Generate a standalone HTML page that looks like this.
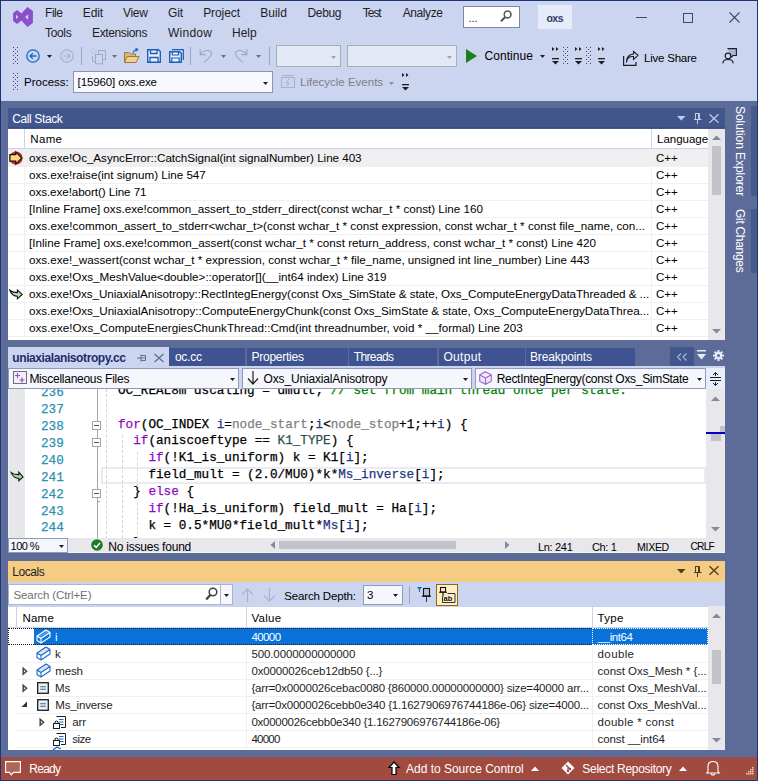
<!DOCTYPE html><html><head><meta charset="utf-8"><style>
*{margin:0;padding:0;box-sizing:border-box}
html,body{width:758px;height:781px;overflow:hidden}
body{position:relative;background:#CCD5F0;font-family:"Liberation Sans",sans-serif;font-size:11.5px;color:#000}
div{position:absolute}
.t{white-space:pre}
.m{font-family:"Liberation Mono",monospace;font-size:12.67px;-webkit-text-stroke:0.25px}
svg{position:absolute;overflow:visible}
</style></head><body><div style="left:0;top:0;width:758px;height:781px;border:1px solid #1B3577;z-index:50;pointer-events:none"></div>
<svg style="left:12px;top:6px" width="22" height="22" viewBox="0 0 22 22"><path d="M1.1 7 L5.1 4 L9.5 7.6 L15.4 1.1 L20.9 4.9 L20.9 17.1 L15.4 20.9 L9.5 14.4 L5.1 18 L1.1 15 Z M4 8.7 L4 13.3 L6.3 11 Z M16.2 8.2 L16.2 13.8 L13 11 Z" fill="#8A4FC9" fill-rule="evenodd"/></svg>
<div class="t" style="left:45.00px;top:4px;line-height:18px;font-size:12px;color:#1E1E1E;letter-spacing:-0.444px">File</div>
<div class="t" style="left:82.80px;top:4px;line-height:18px;font-size:12px;color:#1E1E1E;letter-spacing:-0.159px">Edit</div>
<div class="t" style="left:122.90px;top:4px;line-height:18px;font-size:12px;color:#1E1E1E;letter-spacing:-0.241px">View</div>
<div class="t" style="left:168.00px;top:4px;line-height:18px;font-size:12px;color:#1E1E1E;letter-spacing:-0.168px">Git</div>
<div class="t" style="left:203.20px;top:4px;line-height:18px;font-size:12px;color:#1E1E1E;letter-spacing:-0.091px">Project</div>
<div class="t" style="left:260.20px;top:4px;line-height:18px;font-size:12px;color:#1E1E1E;letter-spacing:0.028px">Build</div>
<div class="t" style="left:307.60px;top:4px;line-height:18px;font-size:12px;color:#1E1E1E;letter-spacing:-0.391px">Debug</div>
<div class="t" style="left:362.80px;top:4px;line-height:18px;font-size:12px;color:#1E1E1E;letter-spacing:-1.036px">Test</div>
<div class="t" style="left:402.70px;top:4px;line-height:18px;font-size:12px;color:#1E1E1E;letter-spacing:-0.399px">Analyze</div>
<div class="t" style="left:45.00px;top:24px;line-height:18px;font-size:12px;color:#1E1E1E;letter-spacing:-0.327px">Tools</div>
<div class="t" style="left:92.00px;top:24px;line-height:18px;font-size:12px;color:#1E1E1E;letter-spacing:-0.367px">Extensions</div>
<div class="t" style="left:168.00px;top:24px;line-height:18px;font-size:12px;color:#1E1E1E;letter-spacing:0.258px">Window</div>
<div class="t" style="left:232.00px;top:24px;line-height:18px;font-size:12px;color:#1E1E1E;letter-spacing:-0.028px">Help</div>
<div style="left:463px;top:6px;width:57px;height:22px;background:#FFFFFF;border:1px solid #7A88A6"></div>
<div class="t" style="left:468.5px;top:9px;line-height:18px;font-size:11px;color:#1E1E1E">...</div>
<svg style="left:500px;top:10px" width="14" height="14" viewBox="0 0 14 14"><circle cx="7.6" cy="4.5" r="3.4" fill="none" stroke="#555" stroke-width="1.5"/><path d="M5.2 7 L1 11.2" stroke="#555" stroke-width="2"/></svg>
<div style="left:538px;top:5px;width:34px;height:24px;background:#E6EBF9"></div>
<div class="t" style="left:546.40px;top:8.5px;line-height:18px;font-size:10.5px;font-weight:bold;color:#2E3B66;letter-spacing:-0.446px">oxs</div>
<div style="left:636px;top:17px;width:11px;height:1px;background:#3A4A78"></div>
<div style="left:683px;top:13px;width:10px;height:10px;border:1px solid #3A4A78"></div>
<svg style="left:729px;top:12px" width="11" height="11" viewBox="0 0 11 11"><path d="M0.5 0.5 L10.5 10.5 M10.5 0.5 L0.5 10.5" stroke="#3A4A78" stroke-width="1.1"/></svg>
<svg style="left:13px;top:47px" width="5" height="17" fill="#3C4670"><rect x="0" y="0" width="1" height="1"/><rect x="4" y="0" width="1" height="1"/><rect x="2" y="2" width="1" height="1"/><rect x="0" y="4" width="1" height="1"/><rect x="4" y="4" width="1" height="1"/><rect x="2" y="6" width="1" height="1"/><rect x="0" y="8" width="1" height="1"/><rect x="4" y="8" width="1" height="1"/><rect x="2" y="10" width="1" height="1"/><rect x="0" y="12" width="1" height="1"/><rect x="4" y="12" width="1" height="1"/><rect x="2" y="14" width="1" height="1"/><rect x="0" y="16" width="1" height="1"/><rect x="4" y="16" width="1" height="1"/></svg>
<svg style="left:26px;top:49px" width="14" height="14" viewBox="0 0 14 14"><circle cx="7" cy="7" r="6.2" fill="none" stroke="#1A6AC6" stroke-width="1.3"/><path d="M10.5 7 H4 M6.8 4.2 L4 7 L6.8 9.8" fill="none" stroke="#1A6AC6" stroke-width="1.3"/></svg>
<svg style="left:47px;top:55px" width="5" height="3"><path d="M0 0 H5 L2.5 3 Z" fill="#1E1E1E"/></svg>
<svg style="left:60px;top:49px" width="14" height="14" viewBox="0 0 14 14"><circle cx="7" cy="7" r="6.2" fill="none" stroke="#A9B1C7" stroke-width="1.2"/><path d="M3.5 7 H10 M7.2 4.2 L10 7 L7.2 9.8" fill="none" stroke="#A9B1C7" stroke-width="1.2"/></svg>
<div style="left:81px;top:47px;width:1px;height:18px;background:#99A3C4"></div>
<svg style="left:90px;top:48px" width="17" height="17" viewBox="0 0 17 17"><rect x="8.5" y="2.5" width="7" height="9" fill="none" stroke="#A3ABC2" stroke-width="1"/><rect x="5.5" y="6.5" width="7" height="9.3" fill="#CCD5F0" stroke="#A3ABC2" stroke-width="1"/><path d="M2.5 8 V13.5 H5" fill="none" stroke="#A3ABC2"/><path d="M3.4 0 V2 M3.4 4.8 V6.8 M0 3.4 H2 M4.8 3.4 H6.8 M1 1 L2 2 M5.8 1 L4.8 2 M1 5.8 L2 4.8 M5.8 5.8 L4.8 4.8" stroke="#B4BBCF" stroke-width="0.8"/></svg>
<svg style="left:112px;top:55px" width="5" height="3"><path d="M0 0 H5 L2.5 3 Z" fill="#6E6E6E"/></svg>
<svg style="left:124px;top:48px" width="16" height="15" viewBox="0 0 16 15"><path d="M0.5 4.5 H5 L6.5 6 H11.5 V14.5 H0.5 Z" fill="#DCB67A" stroke="#9D7A3C"/><path d="M0.5 14.5 L3 8.5 H15 L12 14.5 Z" fill="#F0D094" stroke="#9D7A3C"/><path d="M9 5 Q10 1.5 13.5 1.5 M11.5 0 L13.8 1.5 L11.5 3.2" fill="none" stroke="#1A6AC6" stroke-width="1.2"/></svg>
<svg style="left:147px;top:49px" width="14" height="14" viewBox="0 0 14 14"><path d="M0.7 0.7 H11.5 L13.3 2.5 V13.3 H0.7 Z" fill="#E8EEFA" stroke="#1A5FB4" stroke-width="1.4"/><path d="M3.5 0.7 V4.5 H10 V0.7 M3 13.3 V8.5 H11 V13.3" fill="none" stroke="#1A5FB4" stroke-width="1.3"/></svg>
<svg style="left:169px;top:49px" width="15" height="14" viewBox="0 0 15 14"><path d="M3 0.7 H14.3 V11" fill="none" stroke="#1A5FB4" stroke-width="1.2"/><path d="M0.7 2.7 H10.5 L12.3 4.5 V13.3 H0.7 Z" fill="#E8EEFA" stroke="#1A5FB4" stroke-width="1.4"/><path d="M3.3 2.7 V6 H9.5 V2.7 M2.8 13.3 V9 H10.2 V13.3" fill="none" stroke="#1A5FB4" stroke-width="1.2"/></svg>
<div style="left:190px;top:47px;width:1px;height:18px;background:#99A3C4"></div>
<svg style="left:199px;top:48px" width="14" height="16" viewBox="0 0 14 16"><path d="M1.2 1.3 V6.6 H6.8 M1.8 6 C5 1.5 12.6 1.5 12.6 5.5 C12.6 8 8 12 5.2 14.5" fill="none" stroke="#9EA6BE" stroke-width="1.1"/></svg>
<svg style="left:221px;top:55px" width="5" height="3"><path d="M0 0 H5 L2.5 3 Z" fill="#6E6E6E"/></svg>
<svg style="left:234px;top:48px" width="14" height="16" viewBox="0 0 14 16"><path d="M12.8 1.3 V6.6 H7.2 M12.2 6 C9 1.5 1.4 1.5 1.4 5.5 C1.4 8 6 12 8.8 14.5" fill="none" stroke="#9EA6BE" stroke-width="1.1"/></svg>
<svg style="left:256px;top:55px" width="5" height="3"><path d="M0 0 H5 L2.5 3 Z" fill="#6E6E6E"/></svg>
<div style="left:269px;top:47px;width:1px;height:18px;background:#99A3C4"></div>
<div style="left:276px;top:45px;width:65px;height:22px;background:#E3E8F5;border:1px solid #A9ADB8"></div>
<svg style="left:331px;top:56px" width="5" height="3"><path d="M0 0 H5 L2.5 3 Z" fill="#A0A4B0"/></svg>
<div style="left:347px;top:45px;width:110px;height:22px;background:#E3E8F5;border:1px solid #A9ADB8"></div>
<svg style="left:447px;top:56px" width="5" height="3"><path d="M0 0 H5 L2.5 3 Z" fill="#A0A4B0"/></svg>
<svg style="left:466px;top:49px" width="12" height="14"><path d="M0 0 L11 7 L0 14 Z" fill="#1C7D1C"/></svg>
<div class="t" style="left:484.50px;top:47px;line-height:18px;font-size:12px;letter-spacing:0.066px">Continue</div>
<svg style="left:540px;top:55px" width="5" height="3"><path d="M0 0 H5 L2.5 3 Z" fill="#1E1E1E"/></svg>
<svg style="left:552px;top:47px" width="7" height="18" fill="#1E1E1E"><path d="M0 0 L2.5 2 L0 4 Z M4 0 L6.5 2 L4 4 Z"/><rect x="0" y="11" width="7" height="1.3"/><path d="M0 14 H7 L3.5 17.5 Z"/></svg>
<svg style="left:563px;top:47px" width="5" height="17" fill="#3C4670"><rect x="0" y="0" width="1" height="1"/><rect x="4" y="0" width="1" height="1"/><rect x="2" y="2" width="1" height="1"/><rect x="0" y="4" width="1" height="1"/><rect x="4" y="4" width="1" height="1"/><rect x="2" y="6" width="1" height="1"/><rect x="0" y="8" width="1" height="1"/><rect x="4" y="8" width="1" height="1"/><rect x="2" y="10" width="1" height="1"/><rect x="0" y="12" width="1" height="1"/><rect x="4" y="12" width="1" height="1"/><rect x="2" y="14" width="1" height="1"/><rect x="0" y="16" width="1" height="1"/><rect x="4" y="16" width="1" height="1"/></svg>
<svg style="left:575px;top:47px" width="7" height="18" fill="#1E1E1E"><path d="M0 0 L2.5 2 L0 4 Z M4 0 L6.5 2 L4 4 Z"/><rect x="0" y="11" width="7" height="1.3"/><path d="M0 14 H7 L3.5 17.5 Z"/></svg>
<svg style="left:586px;top:47px" width="5" height="17" fill="#3C4670"><rect x="0" y="0" width="1" height="1"/><rect x="4" y="0" width="1" height="1"/><rect x="2" y="2" width="1" height="1"/><rect x="0" y="4" width="1" height="1"/><rect x="4" y="4" width="1" height="1"/><rect x="2" y="6" width="1" height="1"/><rect x="0" y="8" width="1" height="1"/><rect x="4" y="8" width="1" height="1"/><rect x="2" y="10" width="1" height="1"/><rect x="0" y="12" width="1" height="1"/><rect x="4" y="12" width="1" height="1"/><rect x="2" y="14" width="1" height="1"/><rect x="0" y="16" width="1" height="1"/><rect x="4" y="16" width="1" height="1"/></svg>
<svg style="left:598px;top:47px" width="7" height="18" fill="#1E1E1E"><path d="M0 0 L2.5 2 L0 4 Z M4 0 L6.5 2 L4 4 Z"/><rect x="0" y="11" width="7" height="1.3"/><path d="M0 14 H7 L3.5 17.5 Z"/></svg>
<svg style="left:623px;top:51px" width="16" height="15" viewBox="0 0 16 15"><path d="M0.6 5 V14.4 H13 V11" fill="none" stroke="#1E1E1E" stroke-width="1.2"/><path d="M3.5 11.5 Q4 5 10.5 5.5 V8.5 L15 4.3 L10.5 0.5 V3 Q3.5 3.5 3.5 11.5 Z" fill="none" stroke="#1E1E1E" stroke-width="1.1"/></svg>
<div class="t" style="left:644.00px;top:49px;line-height:18px;font-size:11.5px;letter-spacing:-0.220px">Live Share</div>
<svg style="left:722px;top:48px" width="15" height="16" viewBox="0 0 15 16"><path d="M5.5 0.6 H14.4 V7.5 H11 L9 9.5" fill="#A9B4D5" stroke="#1E1E1E" stroke-width="1.1"/><circle cx="6" cy="8" r="2.8" fill="#CCD5F0" stroke="#1E1E1E" stroke-width="1.2"/><path d="M0.8 15.4 Q1 11.5 6 11.5 Q11 11.5 11.2 15.4" fill="none" stroke="#1E1E1E" stroke-width="1.2"/></svg>
<svg style="left:13px;top:73px" width="5" height="17" fill="#3C4670"><rect x="0" y="0" width="1" height="1"/><rect x="4" y="0" width="1" height="1"/><rect x="2" y="2" width="1" height="1"/><rect x="0" y="4" width="1" height="1"/><rect x="4" y="4" width="1" height="1"/><rect x="2" y="6" width="1" height="1"/><rect x="0" y="8" width="1" height="1"/><rect x="4" y="8" width="1" height="1"/><rect x="2" y="10" width="1" height="1"/><rect x="0" y="12" width="1" height="1"/><rect x="4" y="12" width="1" height="1"/><rect x="2" y="14" width="1" height="1"/><rect x="0" y="16" width="1" height="1"/><rect x="4" y="16" width="1" height="1"/></svg>
<div class="t" style="left:24px;top:73px;line-height:18px;font-size:11.5px">Process:</div>
<div style="left:73px;top:71px;width:200px;height:22px;background:#F7F9FE;border:1px solid #8A95B0"></div>
<div class="t" style="left:77.60px;top:73px;line-height:18px;font-size:11.5px;letter-spacing:-0.129px">[15960] oxs.exe</div>
<svg style="left:263px;top:82px" width="5" height="3"><path d="M0 0 H5 L2.5 3 Z" fill="#1E1E1E"/></svg>
<svg style="left:281px;top:75px" width="14" height="13" viewBox="0 0 14 13"><rect x="0.5" y="2.5" width="13" height="10" fill="none" stroke="#A9B1C7"/><path d="M1 0.5 H13" stroke="#A9B1C7"/><path d="M8 4 L5 8 H8 L6 11" fill="none" stroke="#A9B1C7" stroke-width="1"/></svg>
<div class="t" style="left:300px;top:73px;line-height:18px;font-size:11.5px;color:#7D7F8C">Lifecycle Events</div>
<svg style="left:389px;top:82px" width="5" height="3"><path d="M0 0 H5 L2.5 3 Z" fill="#8A8C96"/></svg>
<svg style="left:402px;top:73px" width="7" height="18" fill="#1E1E1E"><path d="M0 0 L2.5 2 L0 4 Z M4 0 L6.5 2 L4 4 Z"/><rect x="0" y="11" width="7" height="1.3"/><path d="M0 14 H7 L3.5 17.5 Z"/></svg>
<div style="left:1px;top:101px;width:756px;height:656px;background:#5D6B99"></div>
<div style="left:8px;top:108px;width:717px;height:232px;background:#FFFFFF"></div>
<div style="left:8px;top:108px;width:717px;height:21px;background:#40568D"></div>
<div style="left:8px;top:127px;width:717px;height:1px;background:#3A4E82"></div>
<div class="t" style="left:12.30px;top:110px;line-height:18px;font-size:12px;color:#FFFFFF;letter-spacing:-0.393px">Call Stack</div>
<svg style="left:677px;top:116px" width="9" height="5"><path d="M0 0 H8.5 L4.25 4.5 Z" fill="#C3CBE6"/></svg>
<svg style="left:694px;top:113px" width="8" height="11" viewBox="0 0 8 11" fill="none" stroke="#C3CBE6"><path d="M1.5 0.5 H5.5 V6.5 M1.5 0 V6.5 M0 6.5 H7.5 M3.5 6.5 V11"/><path d="M4.5 0.5 V6.5" stroke-width="1"/></svg>
<svg style="left:709px;top:114px" width="10" height="9" viewBox="0 0 10 9"><path d="M0.5 0.2 L9.5 8.8 M9.5 0.2 L0.5 8.8" stroke="#C3CBE6" stroke-width="1.2"/></svg>
<div style="left:24px;top:129px;width:1px;height:20px;background:#C9D3EE"></div>
<div style="left:651px;top:129px;width:1px;height:20px;background:#C9D3EE"></div>
<div style="left:8px;top:148px;width:700px;height:1px;background:#C9D3EE"></div>
<div class="t" style="left:30.30px;top:130px;line-height:18px;font-size:11.5px;letter-spacing:0.339px">Name</div>
<div class="t" style="left:657px;top:130px;line-height:18px;font-size:11.5px">Language</div>
<div style="left:8px;top:149px;width:700px;height:18px;background:#EFEFF0"></div>
<div style="left:8px;top:166px;width:700px;height:1px;background:#F0F0F0"></div>
<div style="left:651px;top:149px;width:1px;height:17px;background:#F0F0F0"></div>
<div style="left:24px;top:149px;width:1px;height:17px;background:#F0F0F0"></div>
<div class="t" style="left:29.00px;top:149px;line-height:18px;font-size:11.67px;letter-spacing:-0.039px">oxs.exe!Oc_AsyncError::CatchSignal(int signalNumber) Line 403</div>
<div class="t" style="left:656px;top:149px;line-height:18px;font-size:11.5px">C++</div>
<div style="left:24px;top:166px;width:627px;height:17px;background:transparent"></div>
<div style="left:8px;top:183px;width:700px;height:1px;background:#F0F0F0"></div>
<div style="left:651px;top:166px;width:1px;height:17px;background:#F0F0F0"></div>
<div style="left:24px;top:166px;width:1px;height:17px;background:#F0F0F0"></div>
<div class="t" style="left:29.00px;top:166px;line-height:18px;font-size:11.67px;letter-spacing:-0.022px">oxs.exe!raise(int signum) Line 547</div>
<div class="t" style="left:656px;top:166px;line-height:18px;font-size:11.5px">C++</div>
<div style="left:24px;top:183px;width:627px;height:17px;background:transparent"></div>
<div style="left:8px;top:200px;width:700px;height:1px;background:#F0F0F0"></div>
<div style="left:651px;top:183px;width:1px;height:17px;background:#F0F0F0"></div>
<div style="left:24px;top:183px;width:1px;height:17px;background:#F0F0F0"></div>
<div class="t" style="left:29.00px;top:183px;line-height:18px;font-size:11.67px;letter-spacing:-0.075px">oxs.exe!abort() Line 71</div>
<div class="t" style="left:656px;top:183px;line-height:18px;font-size:11.5px">C++</div>
<div style="left:24px;top:200px;width:627px;height:17px;background:transparent"></div>
<div style="left:8px;top:217px;width:700px;height:1px;background:#F0F0F0"></div>
<div style="left:651px;top:200px;width:1px;height:17px;background:#F0F0F0"></div>
<div style="left:24px;top:200px;width:1px;height:17px;background:#F0F0F0"></div>
<div class="t" style="left:29.00px;top:200px;line-height:18px;font-size:11.67px;letter-spacing:-0.010px">[Inline Frame] oxs.exe!common_assert_to_stderr_direct(const wchar_t * const) Line 160</div>
<div class="t" style="left:656px;top:200px;line-height:18px;font-size:11.5px">C++</div>
<div style="left:24px;top:217px;width:627px;height:17px;background:transparent"></div>
<div style="left:8px;top:234px;width:700px;height:1px;background:#F0F0F0"></div>
<div style="left:651px;top:217px;width:1px;height:17px;background:#F0F0F0"></div>
<div style="left:24px;top:217px;width:1px;height:17px;background:#F0F0F0"></div>
<div class="t" style="left:29.00px;top:217px;line-height:18px;font-size:11.67px;letter-spacing:0.022px">oxs.exe!common_assert_to_stderr&lt;wchar_t&gt;(const wchar_t * const expression, const wchar_t * const file_name, con...</div>
<div class="t" style="left:656px;top:217px;line-height:18px;font-size:11.5px">C++</div>
<div style="left:24px;top:234px;width:627px;height:17px;background:transparent"></div>
<div style="left:8px;top:251px;width:700px;height:1px;background:#F0F0F0"></div>
<div style="left:651px;top:234px;width:1px;height:17px;background:#F0F0F0"></div>
<div style="left:24px;top:234px;width:1px;height:17px;background:#F0F0F0"></div>
<div class="t" style="left:29.00px;top:234px;line-height:18px;font-size:11.67px;letter-spacing:0.007px">[Inline Frame] oxs.exe!common_assert(const wchar_t * const return_address, const wchar_t * const) Line 420</div>
<div class="t" style="left:656px;top:234px;line-height:18px;font-size:11.5px">C++</div>
<div style="left:24px;top:251px;width:627px;height:17px;background:transparent"></div>
<div style="left:8px;top:268px;width:700px;height:1px;background:#F0F0F0"></div>
<div style="left:651px;top:251px;width:1px;height:17px;background:#F0F0F0"></div>
<div style="left:24px;top:251px;width:1px;height:17px;background:#F0F0F0"></div>
<div class="t" style="left:29.00px;top:251px;line-height:18px;font-size:11.67px;letter-spacing:-0.011px">oxs.exe!_wassert(const wchar_t * expression, const wchar_t * file_name, unsigned int line_number) Line 443</div>
<div class="t" style="left:656px;top:251px;line-height:18px;font-size:11.5px">C++</div>
<div style="left:24px;top:268px;width:627px;height:17px;background:transparent"></div>
<div style="left:8px;top:285px;width:700px;height:1px;background:#F0F0F0"></div>
<div style="left:651px;top:268px;width:1px;height:17px;background:#F0F0F0"></div>
<div style="left:24px;top:268px;width:1px;height:17px;background:#F0F0F0"></div>
<div class="t" style="left:29.00px;top:268px;line-height:18px;font-size:11.67px;letter-spacing:-0.010px">oxs.exe!Oxs_MeshValue&lt;double&gt;::operator[](__int64 index) Line 319</div>
<div class="t" style="left:656px;top:268px;line-height:18px;font-size:11.5px">C++</div>
<div style="left:24px;top:285px;width:627px;height:17px;background:transparent"></div>
<div style="left:8px;top:302px;width:700px;height:1px;background:#F0F0F0"></div>
<div style="left:651px;top:285px;width:1px;height:17px;background:#F0F0F0"></div>
<div style="left:24px;top:285px;width:1px;height:17px;background:#F0F0F0"></div>
<div class="t" style="left:29.00px;top:285px;line-height:18px;font-size:11.67px;letter-spacing:-0.051px">oxs.exe!Oxs_UniaxialAnisotropy::RectIntegEnergy(const Oxs_SimState &amp; state, Oxs_ComputeEnergyDataThreaded &amp; ...</div>
<div class="t" style="left:656px;top:285px;line-height:18px;font-size:11.5px">C++</div>
<div style="left:24px;top:302px;width:627px;height:17px;background:transparent"></div>
<div style="left:8px;top:319px;width:700px;height:1px;background:#F0F0F0"></div>
<div style="left:651px;top:302px;width:1px;height:17px;background:#F0F0F0"></div>
<div style="left:24px;top:302px;width:1px;height:17px;background:#F0F0F0"></div>
<div class="t" style="left:29.00px;top:302px;line-height:18px;font-size:11.67px;letter-spacing:-0.028px">oxs.exe!Oxs_UniaxialAnisotropy::ComputeEnergyChunk(const Oxs_SimState &amp; state, Oxs_ComputeEnergyDataThrea...</div>
<div class="t" style="left:656px;top:302px;line-height:18px;font-size:11.5px">C++</div>
<div style="left:24px;top:319px;width:627px;height:17px;background:transparent"></div>
<div style="left:8px;top:336px;width:700px;height:1px;background:#F0F0F0"></div>
<div style="left:651px;top:319px;width:1px;height:17px;background:#F0F0F0"></div>
<div style="left:24px;top:319px;width:1px;height:17px;background:#F0F0F0"></div>
<div class="t" style="left:29.00px;top:319px;line-height:18px;font-size:11.67px;letter-spacing:0.009px">oxs.exe!Oxs_ComputeEnergiesChunkThread::Cmd(int threadnumber, void * __formal) Line 203</div>
<div class="t" style="left:656px;top:319px;line-height:18px;font-size:11.5px">C++</div>
<svg style="left:8px;top:150px" width="16" height="16" viewBox="0 0 16 16"><circle cx="8" cy="8" r="6.6" fill="#D9262E"/><path d="M1.9 4.7 H7.8 V1.9 L13.8 8 L7.8 14.1 V11.2 H1.9 Z" fill="#FFD77A" stroke="#111" stroke-width="1.2" stroke-linejoin="miter"/></svg>
<svg style="left:8px;top:288px" width="16" height="13" viewBox="0 0 16 13"><path d="M1.8 2.2 Q5 4.6 9.4 4.6 V2 L14.2 6.4 L9.4 10.8 V8.3 Q4 8.2 1.8 2.2 Z" fill="#B5E3B5" stroke="#111" stroke-width="1.1" stroke-linejoin="miter"/></svg>
<div style="left:708px;top:129px;width:17px;height:211px;background:#E8E8EC"></div>
<svg style="left:712px;top:135px" width="9" height="5"><path d="M0 5 H9 L4.5 0.5 Z" fill="#868999"/></svg>
<div style="left:712px;top:146px;width:9px;height:49px;background:#C2C3C9"></div>
<svg style="left:712px;top:329px" width="9" height="5"><path d="M0 0 H9 L4.5 4.5 Z" fill="#868999"/></svg>
<div class="t" style="left:734px;top:106px;width:12px;writing-mode:vertical-rl;font-size:12px;line-height:12px;color:#FFFFFF;letter-spacing:-0.07px">Solution Explorer</div>
<div class="t" style="left:734px;top:209px;width:12px;writing-mode:vertical-rl;font-size:12px;line-height:12px;color:#FFFFFF;letter-spacing:-0.3px">Git Changes</div>
<div style="left:751px;top:106px;width:6px;height:90px;background:#45598A"></div>
<div style="left:751px;top:209px;width:6px;height:64px;background:#45598A"></div>
<div style="left:8px;top:347px;width:161px;height:21px;background:#CCD5F0"></div>
<div class="t" style="left:12.30px;top:349px;line-height:18px;font-size:12px;font-weight:bold;color:#1E2D69;letter-spacing:-0.406px">uniaxialanisotropy.cc</div>
<svg style="left:137px;top:354px" width="10" height="8" viewBox="0 0 10 8"><path d="M0 4 H4 M4 0.5 V7.5 M4 1.5 H8.5 V6.5 H4 M4 4 H8.5" fill="none" stroke="#5D6E96" stroke-width="1"/></svg>
<svg style="left:154px;top:354px" width="10" height="8" viewBox="0 0 10 8"><path d="M0.5 0 L9.5 8 M9.5 0 L0.5 8" stroke="#5A6E96" stroke-width="1.2"/></svg>
<div style="left:169px;top:348px;width:75.5px;height:18px;background:#3E5390"></div>
<div class="t" style="left:174.90px;top:348px;line-height:18px;font-size:12px;color:#FFFFFF;letter-spacing:-0.252px">oc.cc</div>
<div style="left:246.5px;top:348px;width:101.0px;height:18px;background:#3E5390"></div>
<div class="t" style="left:251.50px;top:348px;line-height:18px;font-size:12px;color:#FFFFFF;letter-spacing:-0.255px">Properties</div>
<div style="left:349px;top:348px;width:88px;height:18px;background:#3E5390"></div>
<div class="t" style="left:353.70px;top:348px;line-height:18px;font-size:12px;color:#FFFFFF;letter-spacing:-0.619px">Threads</div>
<div style="left:438.5px;top:348px;width:86.0px;height:18px;background:#3E5390"></div>
<div class="t" style="left:443.40px;top:348px;line-height:18px;font-size:12px;color:#FFFFFF;letter-spacing:0.315px">Output</div>
<div style="left:526px;top:348px;width:109px;height:18px;background:#3E5390"></div>
<div class="t" style="left:530.00px;top:348px;line-height:18px;font-size:12px;color:#FFFFFF;letter-spacing:-0.137px">Breakpoints</div>
<div style="left:670px;top:347px;width:24px;height:19px;background:#40568D"></div>
<svg style="left:676px;top:353px" width="12" height="8" viewBox="0 0 12 8"><path d="M5 0.5 L1.5 4 L5 7.5 M10.5 0.5 L7 4 L10.5 7.5" fill="none" stroke="#A3AFD8" stroke-width="1.3"/></svg>
<svg style="left:697px;top:350px" width="9" height="11"><rect x="0" y="0" width="9" height="1.5" fill="#E8ECF8"/><path d="M0 4 H9 L4.5 9.5 Z" fill="#E8ECF8"/></svg>
<svg style="left:713px;top:350px" width="11" height="11" viewBox="0 0 11 11"><g stroke="#E8ECF8" stroke-width="2"><path d="M5.5 0 V11 M0 5.5 H11 M1.6 1.6 L9.4 9.4 M9.4 1.6 L1.6 9.4"/></g><circle cx="5.5" cy="5.5" r="3.6" fill="#E8ECF8"/><circle cx="5.5" cy="5.5" r="1.5" fill="#5D6B99"/></svg>
<div style="left:8px;top:366px;width:717px;height:2px;background:#CCD5F0"></div>
<div style="left:8px;top:368px;width:717px;height:21px;background:#CCD5F0"></div>
<div style="left:8px;top:368px;width:231px;height:21px;background:#F5F7FD;border:1px solid #8E9AB8"></div>
<svg style="left:13px;top:371px" width="14" height="13" viewBox="0 0 14 13"><rect x="0.5" y="0.5" width="13" height="12" fill="#F3EFF8" stroke="#716C7E"/><path d="M4.5 2 V7 M2 4.5 H7 M9 6.5 V11.5 M6.5 9 H11.5" stroke="#9B4FC5" stroke-width="1.2"/></svg>
<div class="t" style="left:29.40px;top:370px;line-height:18px;font-size:12px;letter-spacing:-0.262px">Miscellaneous Files</div>
<svg style="left:230px;top:378px" width="5" height="3"><path d="M0 0 H5 L2.5 3 Z" fill="#1E1E1E"/></svg>
<div style="left:242px;top:368px;width:230px;height:21px;background:#F5F7FD;border:1px solid #8E9AB8"></div>
<svg style="left:247px;top:371px" width="12" height="14" viewBox="0 0 12 14"><path d="M6 0 V13 M1 7.5 L6 13 L11 7.5" fill="none" stroke="#1E1E1E" stroke-width="1.2"/></svg>
<div class="t" style="left:263.60px;top:370px;line-height:18px;font-size:12px;letter-spacing:-0.166px">Oxs_UniaxialAnisotropy</div>
<svg style="left:463px;top:378px" width="5" height="3"><path d="M0 0 H5 L2.5 3 Z" fill="#1E1E1E"/></svg>
<div style="left:475px;top:368px;width:231px;height:21px;background:#F5F7FD;border:1px solid #8E9AB8"></div>
<svg style="left:479px;top:371px" width="13" height="14" viewBox="0 0 13 14"><path d="M6.5 0.7 L12.3 3.8 V10.2 L6.5 13.3 L0.7 10.2 V3.8 Z M0.7 3.8 L6.5 7 L12.3 3.8 M6.5 7 V13.3" fill="#EEE8F8" stroke="#9B69D0" stroke-width="1.1"/></svg>
<div class="t" style="left:496.70px;top:370px;line-height:18px;font-size:12px;letter-spacing:-0.306px">RectIntegEnergy(const Oxs_SimState</div>
<svg style="left:697px;top:378px" width="5" height="3"><path d="M0 0 H5 L2.5 3 Z" fill="#1E1E1E"/></svg>
<div style="left:706px;top:368px;width:19px;height:21px;background:#E8EEFA"></div>
<svg style="left:710px;top:371px" width="11" height="16" viewBox="0 0 11 16"><path d="M0 6.5 H11 M0 9.5 H11 M5.5 1.5 V5 M5.5 11 V14.5 M3 4 L5.5 1.5 L8 4 M3 12 L5.5 14.5 L8 12" fill="none" stroke="#1E1E1E" stroke-width="1"/></svg>
<div style="left:8px;top:389px;width:717px;height:149px;background:#FFFFFF"></div>
<div style="left:8px;top:389px;width:17px;height:149px;background:#E6E7EA;border-left:1px solid #F0F0F2"></div>
<div style="left:8px;top:389px;width:698px;height:149px;overflow:hidden">
<div style="left:93px;top:78px;width:605px;height:17px;border:2px solid #EAEAF2"></div>
<div class="t m" style="left:33px;top:-4.8px;line-height:17px;color:#2B91AF">236</div>
<div class="t m" style="left:110px;top:-7.3px;line-height:17px"><span style="color:#000">OC_REAL8m dscaling = dmult; </span><span style="color:#008000">// set from main thread once per state.</span></div>
<div class="t m" style="left:33px;top:12.1px;line-height:17px;color:#2B91AF">237</div>
<div class="t m" style="left:110px;top:9.6px;line-height:17px"></div>
<div class="t m" style="left:33px;top:29.0px;line-height:17px;color:#2B91AF">238</div>
<div class="t m" style="left:110px;top:26.5px;line-height:17px"><span style="color:#8F08C4">for</span><span style="color:#000">(OC_INDEX </span><span style="color:#1F377F">i</span><span style="color:#000">=</span><span style="color:#808080">node_start</span><span style="color:#000">;</span><span style="color:#1F377F">i</span><span style="color:#000">&lt;</span><span style="color:#808080">node_stop</span><span style="color:#000">+1;++</span><span style="color:#1F377F">i</span><span style="color:#000">) {</span></div>
<div class="t m" style="left:33px;top:45.9px;line-height:17px;color:#2B91AF">239</div>
<div class="t m" style="left:110px;top:43.4px;line-height:17px"><span style="color:#000">  </span><span style="color:#8F08C4">if</span><span style="color:#000">(aniscoeftype == </span><span style="color:#2F4F4F">K1_TYPE</span><span style="color:#000">) {</span></div>
<div class="t m" style="left:33px;top:62.8px;line-height:17px;color:#2B91AF">240</div>
<div class="t m" style="left:110px;top:60.3px;line-height:17px"><span style="color:#000">    </span><span style="color:#8F08C4">if</span><span style="color:#000">(!K1_is_uniform) k = K1[</span><span style="color:#1F377F">i</span><span style="color:#000">];</span></div>
<div class="t m" style="left:33px;top:79.7px;line-height:17px;color:#2B91AF">241</div>
<div class="t m" style="left:110px;top:77.2px;line-height:17px"><span style="color:#000">    field_mult = (2.0/MU0)*k*</span><span style="color:#1F377F">Ms_inverse</span><span style="color:#000">[</span><span style="color:#1F377F">i</span><span style="color:#000">];</span></div>
<div class="t m" style="left:33px;top:96.6px;line-height:17px;color:#2B91AF">242</div>
<div class="t m" style="left:110px;top:94.1px;line-height:17px"><span style="color:#000">  } </span><span style="color:#8F08C4">else</span><span style="color:#000"> {</span></div>
<div class="t m" style="left:33px;top:113.5px;line-height:17px;color:#2B91AF">243</div>
<div class="t m" style="left:110px;top:111.0px;line-height:17px"><span style="color:#000">    </span><span style="color:#8F08C4">if</span><span style="color:#000">(!Ha_is_uniform) field_mult = Ha[</span><span style="color:#1F377F">i</span><span style="color:#000">];</span></div>
<div class="t m" style="left:33px;top:130.4px;line-height:17px;color:#2B91AF">244</div>
<div class="t m" style="left:110px;top:127.9px;line-height:17px"><span style="color:#000">    k = 0.5*MU0*field_mult*</span><span style="color:#1F377F">Ms</span><span style="color:#000">[</span><span style="color:#1F377F">i</span><span style="color:#000">];</span></div>
<div class="t m" style="left:33px;top:147.3px;line-height:17px;color:#2B91AF">245</div>
<div class="t m" style="left:110px;top:144.8px;line-height:17px"><span style="color:#000">  }</span></div>
<div style="left:89px;top:0;width:1px;height:150px;background:#A5A5A5"></div>
<div style="left:89px;top:112px;width:3px;height:1px;background:#A5A5A5"></div>
<div style="left:84px;top:32px;width:9px;height:9px;border:1px solid #A5A5A5;background:#FFF"><div style="left:1px;top:3px;width:5px;height:1px;background:#555"></div></div>
<div style="left:84px;top:49px;width:9px;height:9px;border:1px solid #A5A5A5;background:#FFF"><div style="left:1px;top:3px;width:5px;height:1px;background:#555"></div></div>
<div style="left:84px;top:100px;width:9px;height:9px;border:1px solid #A5A5A5;background:#FFF"><div style="left:1px;top:3px;width:5px;height:1px;background:#555"></div></div>
<div style="left:98px;top:0;width:0;height:150px;border-left:1px dashed #D4D4D4"></div>
<div style="left:114px;top:46px;width:0;height:103px;border-left:1px dashed #D4D4D4"></div>
<div style="left:129px;top:63px;width:0;height:35px;border-left:1px dashed #D4D4D4"></div>
<div style="left:129px;top:114px;width:0;height:36px;border-left:1px dashed #D4D4D4"></div>
<svg style="left:1px;top:81px" width="16" height="13" viewBox="0 0 16 13"><path d="M2.2 2.6 Q5 4.8 9.8 4.6 V2.3 L14 7 L9.8 10.8 V8.3 Q4.5 8.3 2.2 2.6 Z" fill="#A6E3A6" stroke="#111" stroke-width="1.1" stroke-linejoin="miter"/></svg>
</div>
<div style="left:706px;top:389px;width:19px;height:149px;background:#E8E8EC"></div>
<svg style="left:711px;top:396px" width="9" height="5"><path d="M0 5 H9 L4.5 0.5 Z" fill="#868999"/></svg>
<svg style="left:711px;top:527px" width="9" height="5"><path d="M0 0 H9 L4.5 4.5 Z" fill="#868999"/></svg>
<div style="left:720px;top:426px;width:5px;height:6px;background:#C2C3C9"></div>
<div style="left:711px;top:434px;width:10px;height:7px;background:#C2C3C9"></div>
<div style="left:706px;top:432px;width:19px;height:2px;background:#0000CD"></div>
<div style="left:8px;top:538px;width:717px;height:15px;background:#E7E7EC;border-bottom:1px solid #F2F2F4"></div>
<div style="left:8px;top:538px;width:60px;height:15px;background:#F3F6FD;border:1px solid #8E9AB8"></div>
<div class="t" style="left:10.60px;top:538px;line-height:16px;font-size:11px;letter-spacing:-0.546px">100 %</div>
<svg style="left:59px;top:545px" width="5" height="3"><path d="M0 0 H5 L2.5 3 Z" fill="#1E1E1E"/></svg>
<svg style="left:91px;top:539px" width="12" height="12"><circle cx="6" cy="6" r="5.8" fill="#1B7B26"/><path d="M3 6.2 L5.2 8.3 L9 4" fill="none" stroke="#FFF" stroke-width="1.5"/></svg>
<div class="t" style="left:108.20px;top:538.5px;line-height:16px;font-size:12px;letter-spacing:-0.211px">No issues found</div>
<svg style="left:270px;top:541px" width="5" height="8"><path d="M5 0 V8 L0.5 4 Z" fill="#868999"/></svg>
<div style="left:279px;top:541px;width:177px;height:8px;background:#C2C3C9"></div>
<svg style="left:505px;top:541px" width="5" height="8"><path d="M0 0 V8 L4.5 4 Z" fill="#868999"/></svg>
<div class="t" style="left:537.90px;top:538.5px;line-height:16px;font-size:11px;letter-spacing:-0.299px">Ln: 241</div>
<div class="t" style="left:592.00px;top:538.5px;line-height:16px;font-size:11px;letter-spacing:-0.373px">Ch: 1</div>
<div class="t" style="left:637.10px;top:538.5px;line-height:16px;font-size:10.6px;letter-spacing:-0.343px">MIXED</div>
<div class="t" style="left:690.50px;top:538.5px;line-height:16px;font-size:10.2px;letter-spacing:-0.777px">CRLF</div>
<div style="left:8px;top:561px;width:717px;height:189px;background:#FFFFFF"></div>
<div style="left:8px;top:561px;width:717px;height:21px;background:#F5CC84"></div>
<div class="t" style="left:12.30px;top:563px;line-height:18px;font-size:12px;color:#1E1E1E;letter-spacing:-0.438px">Locals</div>
<svg style="left:677px;top:569px" width="9" height="5"><path d="M0 0 H8.5 L4.25 4.5 Z" fill="#4D3F14"/></svg>
<svg style="left:694px;top:566px" width="8" height="11" viewBox="0 0 8 11" fill="none" stroke="#4D3F14"><path d="M1.5 0.5 H5.5 V6.5 M1.5 0 V6.5 M0 6.5 H7.5 M3.5 6.5 V11"/><path d="M4.5 0.5 V6.5" stroke-width="1"/></svg>
<svg style="left:709px;top:566px" width="10" height="9" viewBox="0 0 10 9"><path d="M0.5 0.2 L9.5 8.8 M9.5 0.2 L0.5 8.8" stroke="#4D3F14" stroke-width="1.3"/></svg>
<div style="left:8px;top:582px;width:717px;height:25px;background:#CCD5F0"></div>
<div style="left:8px;top:584px;width:225px;height:21px;background:#FFFFFF;border:1px solid #A9B4D5"></div>
<div style="left:220px;top:584px;width:13px;height:21px;background:#F5F7FC;border:1px solid #A9B4D5"></div>
<div class="t" style="left:13.50px;top:586px;line-height:18px;font-size:11.5px;color:#717171;letter-spacing:-0.112px">Search (Ctrl+E)</div>
<svg style="left:205px;top:587px" width="13" height="14" viewBox="0 0 13 14"><circle cx="8" cy="5" r="3.8" fill="none" stroke="#424242" stroke-width="1.5"/><path d="M5.5 7.8 L1.2 12.5" stroke="#424242" stroke-width="2.2"/></svg>
<svg style="left:224px;top:594px" width="5" height="3"><path d="M0 0 H5 L2.5 3 Z" fill="#1E1E1E"/></svg>
<svg style="left:241px;top:588px" width="13" height="14" viewBox="0 0 13 14"><path d="M6.5 1 V14 M1 6.5 L6.5 1 L12 6.5" fill="none" stroke="#A9B1C7" stroke-width="1.1"/></svg>
<svg style="left:263px;top:588px" width="13" height="14" viewBox="0 0 13 14"><path d="M6.5 0 V13 M1 7.5 L6.5 13 L12 7.5" fill="none" stroke="#A9B1C7" stroke-width="1.1"/></svg>
<div class="t" style="left:284.20px;top:586.5px;line-height:18px;font-size:11.5px;letter-spacing:-0.143px">Search Depth:</div>
<div style="left:363px;top:585px;width:40px;height:20px;background:#F5F7FD;border:1px solid #8E9AB8"></div>
<div class="t" style="left:367px;top:586px;line-height:18px;font-size:11.5px">3</div>
<svg style="left:393px;top:594px" width="5" height="3"><path d="M0 0 H5 L2.5 3 Z" fill="#1E1E1E"/></svg>
<div style="left:409px;top:586px;width:1px;height:18px;background:#99A3C4"></div>
<svg style="left:416px;top:586px" width="16" height="17" viewBox="0 0 16 17"><path d="M1 1 H6 L4 3.5 V6 H3 V3.5 Z" fill="#1A5FB4"/><rect x="7.5" y="2.5" width="6" height="7.5" fill="#B8C0D8" stroke="#111" stroke-width="1.1"/><path d="M5.8 10.2 H15" stroke="#111" stroke-width="1.2"/><path d="M10.5 10.2 V16" stroke="#333" stroke-width="1"/></svg>
<div style="left:436px;top:584px;width:22px;height:22px;background:#FFEFC8;border:1px solid #8A6A10"></div>
<svg style="left:438px;top:586px" width="18" height="18" viewBox="0 0 18 18"><rect x="2.5" y="1.5" width="5" height="4.5" fill="none" stroke="#111" stroke-width="1.1"/><path d="M1 6.2 H9 M5 6.2 V10.5" stroke="#111" stroke-width="1.1"/><path d="M4.5 10.5 V16.5 H17 V7.5 H9.5" fill="none" stroke="#333" stroke-width="1"/><text x="5.6" y="15" font-size="7.5" font-weight="bold" font-family="Liberation Sans" fill="#111">ab</text></svg>
<div style="left:8px;top:606px;width:700px;height:1px;background:#C9D3EE"></div>
<div style="left:16px;top:607px;width:1px;height:20px;background:#C9D3EE"></div>
<div style="left:246px;top:607px;width:1px;height:20px;background:#C9D3EE"></div>
<div style="left:592px;top:607px;width:1px;height:20px;background:#C9D3EE"></div>
<div style="left:8px;top:627px;width:700px;height:1px;background:#C9D3EE"></div>
<div class="t" style="left:22.50px;top:609px;line-height:18px;font-size:11.5px;letter-spacing:0.206px">Name</div>
<div class="t" style="left:251.40px;top:609px;line-height:18px;font-size:11.5px;letter-spacing:0.286px">Value</div>
<div class="t" style="left:597.60px;top:609px;line-height:18px;font-size:11.5px;letter-spacing:0.256px">Type</div>
<div style="left:34px;top:628px;width:674px;height:17px;background:#0A72D8"></div>
<div style="left:8px;top:628px;width:700px;height:17px;border:1px dotted #1E1E1E;background:transparent"></div>
<svg style="left:36px;top:629px" width="15" height="15" viewBox="0 0 15 15"><path d="M1 7 L10 1 L14 3.5 L5 9.5 Z" fill="#4A93E0"/><path d="M1 7 L10 1 L14 3.5 L14 8 L5 14 L1 11.5 Z M1 7 L5 9.5 L14 3.5 M5 9.5 V14" fill="none" stroke="#FFFFFF" stroke-width="1.1" stroke-linejoin="round"/></svg>
<div class="t" style="left:55px;top:628px;line-height:18px;font-size:11.5px;color:#FFFFFF">i</div>
<div class="t" style="left:251.40px;top:628px;line-height:18px;font-size:11.5px;color:#FFFFFF;letter-spacing:-0.570px">40000</div>
<div style="left:592px;top:628px;width:116px;height:17px;border:1px dotted #FFFFFF;background:transparent"></div>
<div class="t" style="left:597.78px;top:628px;line-height:18px;font-size:11.5px;color:#FFFFFF;letter-spacing:-0.419px">__int64</div>
<div style="left:17px;top:662px;width:691px;height:1px;background:#F0F0F0"></div>
<div style="left:246px;top:645px;width:1px;height:17px;background:#F0F0F0"></div>
<div style="left:592px;top:645px;width:1px;height:17px;background:#F0F0F0"></div>
<svg style="left:36px;top:646px" width="15" height="15" viewBox="0 0 15 15"><path d="M1 7 L10 1 L14 3.5 L5 9.5 Z" fill="#D6E6F8"/><path d="M1 7 L10 1 L14 3.5 L14 8 L5 14 L1 11.5 Z M1 7 L5 9.5 L14 3.5 M5 9.5 V14" fill="none" stroke="#1A6AC6" stroke-width="1.1" stroke-linejoin="round"/></svg>
<div class="t" style="left:55px;top:645px;line-height:18px;font-size:11.5px;color:#1E1E1E">k</div>
<div class="t" style="left:251.40px;top:645px;line-height:18px;font-size:11.5px;color:#1E1E1E;letter-spacing:-0.101px">500.0000000000000</div>
<div class="t" style="left:597.60px;top:645px;line-height:18px;font-size:11.5px;color:#1E1E1E;letter-spacing:0.373px">double</div>
<div style="left:17px;top:679px;width:691px;height:1px;background:#F0F0F0"></div>
<div style="left:246px;top:662px;width:1px;height:17px;background:#F0F0F0"></div>
<div style="left:592px;top:662px;width:1px;height:17px;background:#F0F0F0"></div>
<svg style="left:22px;top:667px" width="6" height="9"><path d="M1.2 1.2 L4.6 4.2 L1.2 7.2 Z" fill="#FFF" stroke="#444" stroke-width="1.5" stroke-linejoin="miter"/></svg>
<svg style="left:36px;top:663px" width="15" height="15" viewBox="0 0 15 15"><path d="M1 7 L10 1 L14 3.5 L5 9.5 Z" fill="#D6E6F8"/><path d="M1 7 L10 1 L14 3.5 L14 8 L5 14 L1 11.5 Z M1 7 L5 9.5 L14 3.5 M5 9.5 V14" fill="none" stroke="#1A6AC6" stroke-width="1.1" stroke-linejoin="round"/></svg>
<div class="t" style="left:55.30px;top:662px;line-height:18px;font-size:11.5px;color:#1E1E1E;letter-spacing:-0.172px">mesh</div>
<div class="t" style="left:251.40px;top:662px;line-height:18px;font-size:11.5px;color:#1E1E1E;letter-spacing:-0.143px">0x0000026ceb12db50 {...}</div>
<div class="t" style="left:597.60px;top:662px;line-height:18px;font-size:11.5px;color:#1E1E1E;letter-spacing:-0.042px">const Oxs_Mesh * {...</div>
<div style="left:17px;top:696px;width:691px;height:1px;background:#F0F0F0"></div>
<div style="left:246px;top:679px;width:1px;height:17px;background:#F0F0F0"></div>
<div style="left:592px;top:679px;width:1px;height:17px;background:#F0F0F0"></div>
<svg style="left:22px;top:684px" width="6" height="9"><path d="M1.2 1.2 L4.6 4.2 L1.2 7.2 Z" fill="#FFF" stroke="#444" stroke-width="1.5" stroke-linejoin="miter"/></svg>
<svg style="left:37px;top:682px" width="12" height="12" viewBox="0 0 12 12"><rect x="0.7" y="0.7" width="10.6" height="10.6" fill="#F2EFEA" stroke="#1E1E1E" stroke-width="1.3"/><path d="M3.2 4.8 H8.8 M3.2 7.2 H8.8" stroke="#1A6AC6" stroke-width="1.1"/></svg>
<div class="t" style="left:55px;top:679px;line-height:18px;font-size:11.5px;color:#1E1E1E">Ms</div>
<div class="t" style="left:251.40px;top:679px;line-height:18px;font-size:11.5px;color:#1E1E1E;letter-spacing:-0.189px">{arr=0x0000026cebac0080 {860000.00000000000} size=40000 arr...</div>
<div class="t" style="left:597.60px;top:679px;line-height:18px;font-size:11.5px;color:#1E1E1E;letter-spacing:-0.100px">const Oxs_MeshVal...</div>
<div style="left:17px;top:713px;width:691px;height:1px;background:#F0F0F0"></div>
<div style="left:246px;top:696px;width:1px;height:17px;background:#F0F0F0"></div>
<div style="left:592px;top:696px;width:1px;height:17px;background:#F0F0F0"></div>
<svg style="left:21px;top:701px" width="7" height="7"><path d="M6 0.5 V6 H0.5 Z" fill="#333"/></svg>
<svg style="left:37px;top:699px" width="12" height="12" viewBox="0 0 12 12"><rect x="0.7" y="0.7" width="10.6" height="10.6" fill="#F2EFEA" stroke="#1E1E1E" stroke-width="1.3"/><path d="M3.2 4.8 H8.8 M3.2 7.2 H8.8" stroke="#1A6AC6" stroke-width="1.1"/></svg>
<div class="t" style="left:55.30px;top:696px;line-height:18px;font-size:11.5px;color:#1E1E1E;letter-spacing:-0.167px">Ms_inverse</div>
<div class="t" style="left:251.40px;top:696px;line-height:18px;font-size:11.5px;color:#1E1E1E;letter-spacing:-0.203px">{arr=0x0000026cebb0e340 {1.1627906976744186e-06} size=4000...</div>
<div class="t" style="left:597.60px;top:696px;line-height:18px;font-size:11.5px;color:#1E1E1E;letter-spacing:-0.100px">const Oxs_MeshVal...</div>
<div style="left:17px;top:730px;width:691px;height:1px;background:#F0F0F0"></div>
<div style="left:246px;top:713px;width:1px;height:17px;background:#F0F0F0"></div>
<div style="left:592px;top:713px;width:1px;height:17px;background:#F0F0F0"></div>
<svg style="left:39px;top:718px" width="6" height="9"><path d="M1.2 1.2 L4.6 4.2 L1.2 7.2 Z" fill="#FFF" stroke="#444" stroke-width="1.5" stroke-linejoin="miter"/></svg>
<svg style="left:53px;top:716px" width="13" height="13" viewBox="0 0 13 13"><path d="M3.5 0.5 H12.5 V11.5 H8" fill="#FFF" stroke="#1E1E1E"/><path d="M6 3.5 H10.5 M6 6 H10.5 M7 8.5 H10.5" stroke="#1A6AC6"/><rect x="0.5" y="7.5" width="6" height="5" fill="#FFF" stroke="#1E1E1E"/><path d="M2 7.5 V5.8 Q3.5 4 5 5.8 V7.5" fill="none" stroke="#1E1E1E"/></svg>
<div class="t" style="left:72.30px;top:713px;line-height:18px;font-size:11.5px;color:#1E1E1E;letter-spacing:-0.176px">arr</div>
<div class="t" style="left:251.40px;top:713px;line-height:18px;font-size:11.5px;color:#1E1E1E;letter-spacing:-0.258px">0x0000026cebb0e340 {1.1627906976744186e-06}</div>
<div class="t" style="left:597.60px;top:713px;line-height:18px;font-size:11.5px;color:#1E1E1E;letter-spacing:0.270px">double * const</div>
<div style="left:17px;top:747px;width:691px;height:1px;background:#F0F0F0"></div>
<div style="left:246px;top:730px;width:1px;height:17px;background:#F0F0F0"></div>
<div style="left:592px;top:730px;width:1px;height:17px;background:#F0F0F0"></div>
<svg style="left:53px;top:733px" width="13" height="13" viewBox="0 0 13 13"><path d="M3.5 0.5 H12.5 V11.5 H8" fill="#FFF" stroke="#1E1E1E"/><path d="M6 3.5 H10.5 M6 6 H10.5 M7 8.5 H10.5" stroke="#1A6AC6"/><rect x="0.5" y="7.5" width="6" height="5" fill="#FFF" stroke="#1E1E1E"/><path d="M2 7.5 V5.8 Q3.5 4 5 5.8 V7.5" fill="none" stroke="#1E1E1E"/></svg>
<div class="t" style="left:72.30px;top:730px;line-height:18px;font-size:11.5px;color:#1E1E1E;letter-spacing:-0.549px">size</div>
<div class="t" style="left:251.40px;top:730px;line-height:18px;font-size:11.5px;color:#1E1E1E;letter-spacing:-0.770px">40000</div>
<div class="t" style="left:597.60px;top:730px;line-height:18px;font-size:11.5px;color:#1E1E1E;letter-spacing:-0.093px">const __int64</div>
<svg style="left:53px;top:747px" width="8" height="3"><path d="M0 3 L4 0 L8 2" fill="none" stroke="#1A6AC6" stroke-width="1.2"/></svg>
<div style="left:708px;top:606px;width:17px;height:144px;background:#E8E8EC"></div>
<svg style="left:712px;top:613px" width="9" height="5"><path d="M0 5 H9 L4.5 0.5 Z" fill="#868999"/></svg>
<div style="left:712px;top:650px;width:9px;height:34px;background:#C2C3C9"></div>
<svg style="left:712px;top:738px" width="9" height="5"><path d="M0 0 H9 L4.5 4.5 Z" fill="#868999"/></svg>
<div style="left:1px;top:757px;width:756px;height:23px;background:#A14A40"></div>
<svg style="left:5px;top:761px" width="16" height="16" viewBox="0 0 16 16"><path d="M0.6 0.6 H15.4 V11.4 H8.5 L6.3 13.8 L4.5 11.4 H0.6 Z" fill="#B0645A" stroke="#FFF" stroke-width="1.1"/></svg>
<div class="t" style="left:29.30px;top:760px;line-height:18px;font-size:12px;color:#FFFFFF;letter-spacing:-0.748px">Ready</div>
<svg style="left:388px;top:761px" width="12" height="15" viewBox="0 0 12 15"><path d="M6 1 L11 6.5 H8 V13.5 H4 V6.5 H1 Z" fill="#FFF" stroke="#000" stroke-width="1.2"/></svg>
<div class="t" style="left:406.10px;top:760px;line-height:18px;font-size:12px;color:#FFFFFF;letter-spacing:-0.023px">Add to Source Control</div>
<svg style="left:531px;top:766px" width="8" height="5"><path d="M0 5 H8 L4 0.5 Z" fill="#FFF"/></svg>
<svg style="left:561px;top:761px" width="14" height="14" viewBox="0 0 14 14"><path d="M7 0.5 L13.5 7 L7 13.5 L0.5 7 Z" fill="#FFF"/><path d="M5 4 L9 8 M7 6 V10" stroke="#A14A40" stroke-width="1.3"/><circle cx="7" cy="10" r="1.2" fill="#A14A40"/><circle cx="9" cy="8" r="1.2" fill="#A14A40"/></svg>
<div class="t" style="left:582.30px;top:760px;line-height:18px;font-size:12px;color:#FFFFFF;letter-spacing:-0.284px">Select Repository</div>
<svg style="left:679px;top:766px" width="8" height="5"><path d="M0 5 H8 L4 0.5 Z" fill="#FFF"/></svg>
<svg style="left:706px;top:760px" width="14" height="16" viewBox="0 0 14 16"><path d="M2 11.5 V6.5 Q2 1.5 7 1.5 Q12 1.5 12 6.5 V11.5 L13.3 13 H0.7 Z M5 14 Q7 16 9 14" fill="none" stroke="#FFF" stroke-width="1.1"/></svg>
<svg style="left:744px;top:767px" width="10" height="8" fill="#F2C9A8"><rect x="8" y="0" width="1.5" height="1.5"/><rect x="6" y="2" width="1.5" height="1.5"/><rect x="8" y="2" width="1.5" height="1.5"/><rect x="4" y="4" width="1.5" height="1.5"/><rect x="6" y="4" width="1.5" height="1.5"/><rect x="8" y="4" width="1.5" height="1.5"/><rect x="2" y="6" width="1.5" height="1.5"/><rect x="4" y="6" width="1.5" height="1.5"/><rect x="6" y="6" width="1.5" height="1.5"/><rect x="8" y="6" width="1.5" height="1.5"/></svg></body></html>
